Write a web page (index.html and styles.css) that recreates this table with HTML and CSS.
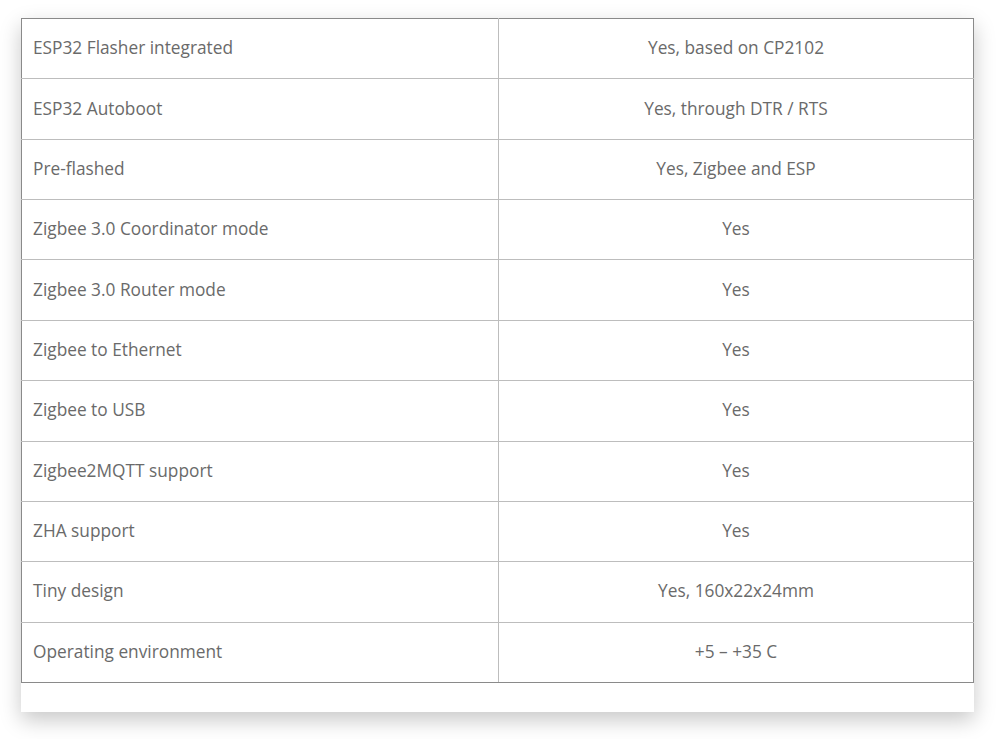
FILE: index.html
```html
<!DOCTYPE html>
<html>
<head>
<meta charset="utf-8">
<link rel="stylesheet" href="styles.css">
</head>
<body>
<div class="card">
  <table class="spec">
    <tbody>
      <tr><td>ESP32 Flasher integrated</td><td>Yes, based on CP2102</td></tr>
      <tr><td>ESP32 Autoboot</td><td>Yes, through DTR / RTS</td></tr>
      <tr><td>Pre-flashed</td><td>Yes, Zigbee and ESP</td></tr>
      <tr><td>Zigbee 3.0 Coordinator mode</td><td>Yes</td></tr>
      <tr><td>Zigbee 3.0 Router mode</td><td>Yes</td></tr>
      <tr><td>Zigbee to Ethernet</td><td>Yes</td></tr>
      <tr><td>Zigbee to USB</td><td>Yes</td></tr>
      <tr><td>Zigbee2MQTT support</td><td>Yes</td></tr>
      <tr><td>ZHA support</td><td>Yes</td></tr>
      <tr><td>Tiny design</td><td>Yes, 160x22x24mm</td></tr>
      <tr><td>Operating environment</td><td>+5 – +35 C</td></tr>
    </tbody>
  </table>
</div>
</body>
</html>
```
FILE: styles.css
```css
html, body {
  margin: 0;
  padding: 0;
  background: #ffffff;
}
body {
  padding: 18px 0 0 21px;
  min-height: 739px;
  box-sizing: border-box;
  font-family: "Open Sans", "Liberation Sans", sans-serif;
}
.card {
  width: 953px;
  height: 694px;
  background: #ffffff;
  box-shadow: 0 8px 20px rgba(0, 0, 0, 0.22);
  box-sizing: border-box;
}
.spec {
  width: 100%;
  border-collapse: collapse;
  border: 1px solid #8a8a8a;
  table-layout: fixed;
}
.spec td {
  border: 1px solid #bdbdbd;
  height: 60.36px;
  padding: 0 11px 2px;
  box-sizing: border-box;
  font-size: 17.3px;
  color: #6a6a6a;
  vertical-align: middle;
}
.spec td:first-child {
  width: 477px;
  text-align: left;
  border-left: 1px solid #8a8a8a;
}
.spec td:last-child {
  text-align: center;
  border-right: 1px solid #8a8a8a;
}
.spec tr:first-child td {
  border-top: 1px solid #8a8a8a;
}
.spec tr:last-child td {
  border-bottom: 1px solid #8a8a8a;
}
```
